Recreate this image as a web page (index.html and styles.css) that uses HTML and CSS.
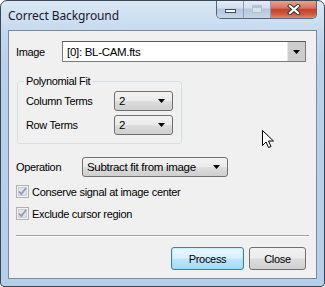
FILE: index.html
```html
<!DOCTYPE html>
<html>
<head>
<meta charset="utf-8">
<link rel="stylesheet" href="styles.css">
</head>
<body>
<div class="window">
  <div class="titlebar">
    <span class="title">Correct Background</span>
    <div class="caption">
      <div class="cbtn cmin"><span class="minbar"></span></div>
      <div class="cbtn cmax"><span class="maxbox"></span></div>
      <div class="cbtn cclose">
        <svg width="14" height="11" viewBox="0 0 14 11"><path d="M3 2 L11 9 M11 2 L3 9" stroke="#3a3a3a" stroke-width="4.2" stroke-linecap="square"/><path d="M3 2 L11 9 M11 2 L3 9" stroke="#fff" stroke-width="2.2" stroke-linecap="square"/></svg>
      </div>
    </div>
  </div>
  <div class="client">
    <div class="row row-image">
      <span class="lbl lbl-image">Image</span>
      <div class="combo-edit">
        <span class="combo-text">[0]: BL-CAM.fts</span>
        <span class="drop-btn"><svg width="7" height="4" viewBox="0 0 7 4"><path d="M0 0H7L3.5 4Z" fill="#000"/></svg></span>
      </div>
    </div>
    <div class="group">
      <span class="legend">Polynomial Fit</span>
      <div class="row row-terms">
        <span class="lbl lbl-terms">Column Terms</span>
        <div class="combo-list small"><span>2</span><svg width="7" height="4" viewBox="0 0 7 4"><path d="M0 0H7L3.5 4Z" fill="#000"/></svg></div>
      </div>
      <div class="row row-terms row-terms2">
        <span class="lbl lbl-terms">Row Terms</span>
        <div class="combo-list small"><span>2</span><svg width="7" height="4" viewBox="0 0 7 4"><path d="M0 0H7L3.5 4Z" fill="#000"/></svg></div>
      </div>
    </div>
    <div class="row row-op">
      <span class="lbl lbl-op">Operation</span>
      <div class="combo-list wide"><span>Subtract fit from image</span><svg width="7" height="4" viewBox="0 0 7 4"><path d="M0 0H7L3.5 4Z" fill="#000"/></svg></div>
    </div>
    <div class="row check first">
      <span class="cb"><svg width="13" height="13" viewBox="0 0 13 13"><rect x="0.5" y="0.5" width="12" height="12" fill="#f4f4f4" stroke="#b1b1b1"/><rect x="2.5" y="2.5" width="8" height="8" fill="#e2e2e2" stroke="#cfcfcf"/><path d="M3 6.5 L5.3 9 L10 3" fill="none" stroke="#8a9cc8" stroke-width="1.8"/></svg></span>
      <span class="cbl">Conserve signal at image center</span>
    </div>
    <div class="row check">
      <span class="cb"><svg width="13" height="13" viewBox="0 0 13 13"><rect x="0.5" y="0.5" width="12" height="12" fill="#f4f4f4" stroke="#b1b1b1"/><rect x="2.5" y="2.5" width="8" height="8" fill="#e2e2e2" stroke="#cfcfcf"/><path d="M3 6.5 L5.3 9 L10 3" fill="none" stroke="#8a9cc8" stroke-width="1.8"/></svg></span>
      <span class="cbl">Exclude cursor region</span>
    </div>
    <div class="sep"></div>
    <div class="row buttons">
      <div class="btn primary">Process</div>
      <div class="btn">Close</div>
    </div>
    <svg class="cursor" width="13" height="20" viewBox="0 0 13 20"><path d="M0.5 0.5 V15.5 L4 12 L6.5 17.5 L9 16.5 L6.5 11 L11.5 11 Z" fill="#fff" stroke="#000" stroke-width="1" stroke-linejoin="round"/></svg>
  </div>
</div>
</body>
</html>
```

FILE: styles.css
```css
* { box-sizing: border-box; }
html, body { margin: 0; padding: 0; background: #ffffff; }
body { font-family: "Liberation Sans", Arial, sans-serif; font-size: 11px; color: #000; }

.window {
  width: 325px; height: 287px;
  border: 1px solid #3c4654;
  border-radius: 7px 7px 4px 4px;
  background: linear-gradient(180deg, #dbe8f5 0px, #c5d9ee 30px, #b9d1ea 60px, #b6cfe9 100%);
  padding: 0 7px 7px 7px;
  display: flex; flex-direction: column;
  overflow: hidden;
}

.titlebar {
  height: 29px;
  display: flex; justify-content: space-between; align-items: flex-start;
}
.title {
  font-family: "Noto Sans", "Open Sans", sans-serif;
  font-size: 12px; color: #1a1a2a;
  margin-top: 6px;
  letter-spacing: -0.1px;
}
.caption {
  display: flex; height: 19px; margin-top: -1px;
  border: 1px solid #54657d; border-top: none;
  border-radius: 0 0 5px 5px;
  overflow: hidden;
}
.cbtn { height: 100%; display: flex; align-items: center; justify-content: center; }
.cmin, .cmax {
  width: 27px;
  background: linear-gradient(180deg, #e6eef7 0%, #d2dfee 45%, #b4c6dd 50%, #c7d7ea 100%);
  border-right: 1px solid #8a9bb2;
}
.minbar { width: 11px; height: 4px; background: #fff; border: 1px solid #40485a; margin-top: 4px; }
.maxbox { width: 10px; height: 8px; border: 1px solid #b4c0d0; background: #dde5ee; box-shadow: inset 0 2px 0 #b4c0d0; opacity: 0.9; }
.cclose {
  width: 45px;
  background: linear-gradient(180deg, #e9a894 0%, #d5745e 45%, #c2422a 52%, #d05a3e 80%, #e08a6a 100%);
}

.client {
  flex: 1;
  border: 1px solid #7b8aa0;
  background: #f0f0f0;
  padding: 0 7px 0 7px;
  display: flex; flex-direction: column;
  position: relative;
}

.row { display: flex; align-items: center; }
.lbl { letter-spacing: -0.35px; color: #000; }

.row-image { margin-top: 10px; height: 21px; margin-right: 3px; }
.lbl-image { width: 46px; }
.combo-edit {
  flex: 1; height: 21px;
  background: #fff;
  border: 1px solid #7a7a7a;
  border-top-color: #5a5a5a;
  display: flex; align-items: stretch;
}
.combo-text { flex: 1; padding-left: 4px; display: flex; align-items: center; letter-spacing: -0.3px; font-size: 11.5px; }
.drop-btn {
  width: 18px; background: #cdcdcd;
  border-left: 1px solid #e8e8e8;
  display: flex; align-items: center; justify-content: center;
}

.group {
  margin-top: 19px; margin-left: 1px;
  width: 165px; height: 63px;
  border: 1px solid #d5dfe5;
  border-radius: 3px;
  padding: 0 0 0 8px;
  display: flex; flex-direction: column;
}
.legend {
  margin-top: -8px; margin-left: -2px;
  background: #f0f0f0; padding: 0 2px;
  width: max-content; height: 14px; line-height: 14px;
  letter-spacing: -0.35px;
}
.row-terms { margin-top: 3px; height: 20px; }
.row-terms2 { margin-top: 4px; }
.lbl-terms { width: 88px; }

.combo-list {
  height: 20px;
  border: 1px solid #707070;
  border-radius: 3px;
  background: linear-gradient(180deg, #f2f2f2 0%, #ebebeb 48%, #dddddd 52%, #cfcfcf 100%);
  display: flex; align-items: center; justify-content: space-between;
  padding: 0 7px 0 4px;
  letter-spacing: -0.3px;
  font-size: 11.5px;
}
.combo-list.small { width: 59px; }
.combo-list.wide { width: 146px; }

.row-op { margin-top: 13px; height: 20px; }
.lbl-op { width: 66px; }

.check { height: 17px; margin-top: 5px; }
.check.first { margin-top: 6px; }
.cb { width: 13px; height: 13px; display: flex; }
.cbl { margin-left: 3px; letter-spacing: -0.3px; }

.sep {
  margin-top: 13px;
  height: 2px;
  border-top: 1px solid #a0a0a0;
  border-bottom: 1px solid #ffffff;
}

.buttons { margin-top: 10px; justify-content: flex-end; gap: 5px; margin-right: 3px; }
.btn {
  width: 57px; height: 23px;
  border: 1px solid #707070; border-radius: 3px;
  background: linear-gradient(180deg, #f2f2f2 0%, #ebebeb 48%, #dddddd 52%, #cfcfcf 100%);
  display: flex; align-items: center; justify-content: center;
  letter-spacing: -0.3px;
}
.btn.primary {
  width: 73px;
  border-color: #3c7fb1;
  background: linear-gradient(180deg, #eaf6fd 0%, #d9f0fc 48%, #bee6fd 52%, #a7d9f5 100%);
  box-shadow: inset 0 0 0 1px #48d8fb33;
}

.cursor { position: absolute; left: 253px; top: 99px; }
```
